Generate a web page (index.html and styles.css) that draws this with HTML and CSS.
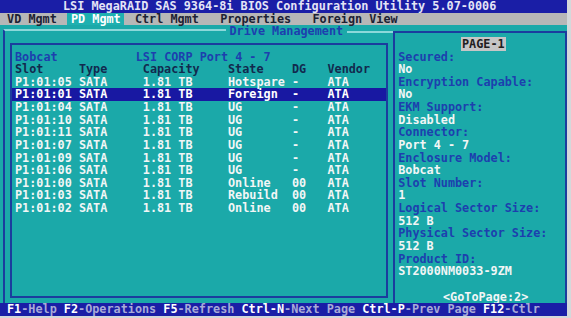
FILE: index.html
```html
<!DOCTYPE html>
<html lang="en">
<head>
    <meta charset="UTF-8">
    <meta name="viewport" content="width=device-width, initial-scale=1.0">
    <title>MegaRAID BIOS Configuration Utility</title>
    <link rel="stylesheet" href="styles.css">
</head>
<body>
    <div class="screen">
        <div class="titlebar">LSI MegaRAID SAS 9364-8i BIOS Configuration Utility 5.07-0006</div>
        <div class="menubar">
            <span class="tab">VD Mgmt</span>
            <span class="tab active">PD Mgmt</span>
            <span class="tab">Ctrl Mgmt</span>
            <span class="tab spaced">Properties</span>
            <span class="tab spaced">Foreign View</span>
        </div>
        <div class="main">
            <div class="drive">
                <div class="drive-head"><span class="drive-title">Drive Management</span></div>
                <div class="drive-body">
                    <div class="drive-box">
                        <div class="line enclosure"><span class="encl-name">Bobcat</span><span>LSI CORP Port 4 - 7</span></div>
                        <div class="line row head"><span>Slot</span><span>Type</span><span>Capacity</span><span>State</span><span>DG</span><span>Vendor</span></div>
                        <div class="line row"><span>P1:01:05</span><span>SATA</span><span>1.81 TB</span><span>Hotspare</span><span>-</span><span>ATA</span></div>
                        <div class="line row selected"><span>P1:01:01</span><span>SATA</span><span>1.81 TB</span><span>Foreign</span><span>-</span><span>ATA</span></div>
                        <div class="line row"><span>P1:01:04</span><span>SATA</span><span>1.81 TB</span><span>UG</span><span>-</span><span>ATA</span></div>
                        <div class="line row"><span>P1:01:10</span><span>SATA</span><span>1.81 TB</span><span>UG</span><span>-</span><span>ATA</span></div>
                        <div class="line row"><span>P1:01:11</span><span>SATA</span><span>1.81 TB</span><span>UG</span><span>-</span><span>ATA</span></div>
                        <div class="line row"><span>P1:01:07</span><span>SATA</span><span>1.81 TB</span><span>UG</span><span>-</span><span>ATA</span></div>
                        <div class="line row"><span>P1:01:09</span><span>SATA</span><span>1.81 TB</span><span>UG</span><span>-</span><span>ATA</span></div>
                        <div class="line row"><span>P1:01:06</span><span>SATA</span><span>1.81 TB</span><span>UG</span><span>-</span><span>ATA</span></div>
                        <div class="line row"><span>P1:01:00</span><span>SATA</span><span>1.81 TB</span><span>Online</span><span>00</span><span>ATA</span></div>
                        <div class="line row"><span>P1:01:03</span><span>SATA</span><span>1.81 TB</span><span>Rebuild</span><span>00</span><span>ATA</span></div>
                        <div class="line row"><span>P1:01:02</span><span>SATA</span><span>1.81 TB</span><span>Online</span><span>00</span><span>ATA</span></div>
                    </div>
                </div>
            </div>
            <div class="info">
                <div class="line page"><span class="page-tag">PAGE-1</span></div>
                <div class="line label">Secured:</div>
                <div class="line">No</div>
                <div class="line label">Encryption Capable:</div>
                <div class="line">No</div>
                <div class="line label">EKM Support:</div>
                <div class="line">Disabled</div>
                <div class="line label">Connector:</div>
                <div class="line">Port 4 - 7</div>
                <div class="line label">Enclosure Model:</div>
                <div class="line">Bobcat</div>
                <div class="line label">Slot Number:</div>
                <div class="line">1</div>
                <div class="line label">Logical Sector Size:</div>
                <div class="line">512 B</div>
                <div class="line label">Physical Sector Size:</div>
                <div class="line">512 B</div>
                <div class="line label">Product ID:</div>
                <div class="line">ST2000NM0033-9ZM</div>
                <div class="line goto">&lt;GoToPage:2&gt;</div>
            </div>
        </div>
        <div class="footer"><span class="key">F1</span>-Help <span class="key">F2</span>-Operations <span class="key">F5</span>-Refresh <span class="key">Ctrl-N</span>-Next Page <span class="key">Ctrl-P</span>-Prev Page <span class="key">F12</span>-Ctlr</div>
    </div>
</body>
</html>
```

FILE: styles.css
```css
* {
    box-sizing: border-box;
}
body {
    margin: 0;
    background: #d4d8da;
}
.screen {
    width: 567px;
    height: 316px;
    display: flex;
    flex-direction: column;
    font-family: "DejaVu Sans Mono", "Liberation Mono", monospace;
    font-size: 11.8px;
    font-weight: bold;
    line-height: 12.64px;
    background: #1ba9a9;
    color: #f2f6f6;
}
.titlebar {
    height: 12.64px;
    padding-left: 63px;
    background: #1a1ea6;
    color: #e4e4f6;
    white-space: pre;
}
.menubar {
    height: 12.64px;
    display: flex;
    padding-left: 0.5ch;
    background: #b7b7b7;
    color: #1d2233;
}
.tab {
    padding: 0 0.5ch;
    white-space: pre;
}
.tab + .tab {
    margin-left: 1ch;
}
.tab.spaced {
    margin-left: 2ch;
}
.tab.active {
    background: #1fb0b0;
    color: #ffffff;
}

/* main area */
.main {
    flex: 1;
    display: flex;
}
.drive {
    flex: 1;
    margin-left: 3.4px;
    display: flex;
    flex-direction: column;
}
.drive-head {
    height: 12.64px;
    display: flex;
    align-items: center;
}
.drive-head::before {
    content: "";
    width: 220.6px;
    height: 7.32px;
    align-self: flex-end;
    border-top: 2px solid #8cd8da;
    border-left: 2px solid #1b3d9e;
}
.drive-head::after {
    content: "";
    flex: 1;
    height: 2px;
    background: #8cd8da;
}
.drive-title {
    padding: 0 3.5px;
    color: #1d3fae;
    white-space: pre;
}
.drive-body {
    flex: 1;
    border-left: 2px solid #1b3d9e;
    padding: 5.28px 0 0 5.1px;
}
.drive-box {
    width: 377.2px;
    height: 254.8px;
    border: 2px solid #1b3d9e;
    padding-top: 5.36px;
}
.line {
    height: 12.64px;
    white-space: pre;
}
.drive-box .line {
    padding-left: 2.5px;
}
.enclosure {
    display: flex;
    color: #1d3fae;
}
.encl-name {
    width: 17ch;
}
.row {
    display: grid;
    grid-template-columns: 9ch 9ch 12ch 9ch 5ch 1fr;
}
.row.head {
    color: #12294e;
}
.row.selected {
    background: #1818a2;
    color: #ffffff;
}

/* detail panel */
.info {
    width: 173.8px;
    margin-top: 5.32px;
    border: 2px solid #1b3d9e;
    border-bottom: 0;
    padding: 5.32px 0 0 3px;
    display: flex;
    flex-direction: column;
}
.page {
    padding-left: 62.8px;
}
.page-tag {
    background: #c6c6c6;
    color: #202020;
    padding: 0 1px;
}
.label {
    color: #1d3fae;
}
.goto {
    margin-top: auto;
    padding-left: 44.8px;
}

.footer {
    height: 12.64px;
    padding-left: 7px;
    background: #1a1ea6;
    color: #a8aad8;
    white-space: pre;
}
.key {
    color: #ffffff;
}
```
